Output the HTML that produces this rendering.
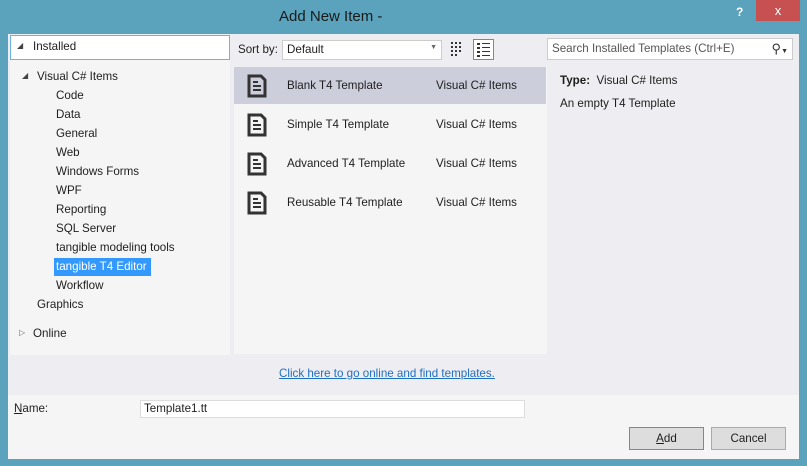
<!DOCTYPE html>
<html><head><style>
*{margin:0;padding:0;box-sizing:border-box}
body{width:807px;height:466px;background:#5ba3bc;font-family:"Liberation Sans",sans-serif;font-size:11.6px;color:#1e1e1e;position:relative;overflow:hidden}
.a{position:absolute;white-space:nowrap}
.ico{position:absolute;width:20px;height:24px}
</style></head><body>
<div class="a" style="left:0;top:0;width:807px;height:34px;background:#5ba3bc"></div>
<div class="a" style="left:279px;top:8px;font-size:15px;color:#1a1a1a">Add New Item -</div>
<div class="a" style="left:736px;top:5px;font-size:12px;color:#fff;font-weight:bold">?</div>
<div class="a" style="left:756px;top:0;width:44px;height:21px;background:#c75050;color:#fff;text-align:center;line-height:21px;font-size:13px">x</div>
<div class="a" style="left:8px;top:34px;width:791px;height:425px;background:#eeeef2"></div>
<div class="a" style="left:10px;top:35px;width:220px;height:320px;background:#f5f5f5"></div>
<div class="a" style="left:10px;top:35px;width:220px;height:25px;background:#fff;border:1px solid #6fb3dd"></div>
<div class="a" style="left:17px;top:41px;font-size:8px;color:#444">◢</div>
<div class="a" style="left:33px;top:40px">Installed</div>
<div class="a" style="left:22px;top:71px;font-size:8px;color:#444">◢</div>
<div class="a" style="left:37px;top:70px">Visual C# Items</div>
<div class="a" style="left:56px;top:89px">Code</div>
<div class="a" style="left:56px;top:108px">Data</div>
<div class="a" style="left:56px;top:127px">General</div>
<div class="a" style="left:56px;top:146px">Web</div>
<div class="a" style="left:56px;top:165px">Windows Forms</div>
<div class="a" style="left:56px;top:184px">WPF</div>
<div class="a" style="left:56px;top:203px">Reporting</div>
<div class="a" style="left:56px;top:222px">SQL Server</div>
<div class="a" style="left:56px;top:241px">tangible modeling tools</div>
<div class="a" style="left:54px;top:258px;width:97px;height:18px;background:#3399ff;color:#fff;padding:2px 2px">tangible T4 Editor</div>
<div class="a" style="left:56px;top:279px">Workflow</div>
<div class="a" style="left:37px;top:298px">Graphics</div>
<div class="a" style="left:19px;top:328px;font-size:8px;color:#666">▷</div>
<div class="a" style="left:33px;top:327px">Online</div>
<div class="a" style="left:238px;top:43px">Sort by:</div>
<div class="a" style="left:282px;top:40px;width:160px;height:20px;background:#fff;border:1px solid #ccc;padding:2px 4px">Default<span style="position:absolute;right:4px;top:3px;font-size:7px;color:#666">▼</span></div>
<svg class="a" style="left:451px;top:42px" width="14" height="14"><g fill="#333"><rect x="0" y="0" width="2" height="2"/><rect x="4" y="0" width="2" height="2"/><rect x="8" y="0" width="2" height="2"/><rect x="0" y="4" width="2" height="2"/><rect x="4" y="4" width="2" height="2"/><rect x="8" y="4" width="2" height="2"/><rect x="0" y="8" width="2" height="2"/><rect x="4" y="8" width="2" height="2"/><rect x="8" y="8" width="2" height="2"/><rect x="0" y="12" width="2" height="2"/><rect x="4" y="12" width="2" height="2"/></g></svg>
<div class="a" style="left:473px;top:39px;width:21px;height:21px;border:1px solid #3399ff;background:#fff"></div>
<svg class="a" style="left:477px;top:43px" width="14" height="14"><g fill="#333"><rect x="0" y="0" width="3" height="2"/><rect x="5" y="0" width="8" height="1"/><rect x="0" y="4" width="3" height="2"/><rect x="5" y="4" width="8" height="1"/><rect x="0" y="8" width="3" height="2"/><rect x="5" y="8" width="8" height="1"/><rect x="0" y="12" width="3" height="2"/><rect x="5" y="12" width="8" height="1"/></g></svg>
<div class="a" style="left:547px;top:38px;width:246px;height:22px;background:#fff;border:1px solid #ccc;padding:3px 4px;color:#555">Search Installed Templates (Ctrl+E)<span style="position:absolute;right:4px;top:2px;color:#333;font-size:13px">⚲<span style="font-size:7px">▼</span></span></div>
<div class="a" style="left:234px;top:67px;width:313px;height:287px;background:#f5f5f5"></div>
<div class="a" style="left:234px;top:67px;width:312px;height:37px;background:#cccedb"></div>
<svg width="0" height="0" style="position:absolute"><defs><g id="doc"><path d="M2 2H14L18 6V22H2Z" fill="none" stroke="#333" stroke-width="3"/><rect x="6" y="11" width="8" height="2" fill="#333"/><rect x="6" y="15" width="8" height="2" fill="#333"/><rect x="6" y="7" width="5" height="2" fill="#333"/></g></defs></svg>
<svg class="ico" style="left:247px;top:74px"><use href="#doc"/></svg>
<svg class="ico" style="left:247px;top:113px"><use href="#doc"/></svg>
<svg class="ico" style="left:247px;top:152px"><use href="#doc"/></svg>
<svg class="ico" style="left:247px;top:191px"><use href="#doc"/></svg>
<div class="a" style="left:287px;top:79px">Blank T4 Template</div><div class="a" style="left:436px;top:79px">Visual C# Items</div>
<div class="a" style="left:287px;top:118px">Simple T4 Template</div><div class="a" style="left:436px;top:118px">Visual C# Items</div>
<div class="a" style="left:287px;top:157px">Advanced T4 Template</div><div class="a" style="left:436px;top:157px">Visual C# Items</div>
<div class="a" style="left:287px;top:196px">Reusable T4 Template</div><div class="a" style="left:436px;top:196px">Visual C# Items</div>
<div class="a" style="left:560px;top:74px"><b>Type:</b>&nbsp; Visual C# Items</div>
<div class="a" style="left:560px;top:97px">An empty T4 Template</div>
<div class="a" style="left:279px;top:367px;color:#1e6fc1;text-decoration:underline">Click here to go online and find templates.</div>
<div class="a" style="left:8px;top:395px;width:791px;height:64px;background:#f5f5f5"></div>
<div class="a" style="left:14px;top:402px"><u>N</u>ame:</div>
<div class="a" style="left:140px;top:400px;width:385px;height:18px;background:#fff;border:1px solid #ddd;padding:1px 3px">Template1.tt</div>
<div class="a" style="left:629px;top:427px;width:75px;height:23px;background:#ddd;border:1px solid #3399ff;text-align:center;line-height:21px"><u>A</u>dd</div>
<div class="a" style="left:711px;top:427px;width:75px;height:23px;background:#ddd;border:1px solid #aaa;text-align:center;line-height:21px">Cancel</div>
</body></html>
